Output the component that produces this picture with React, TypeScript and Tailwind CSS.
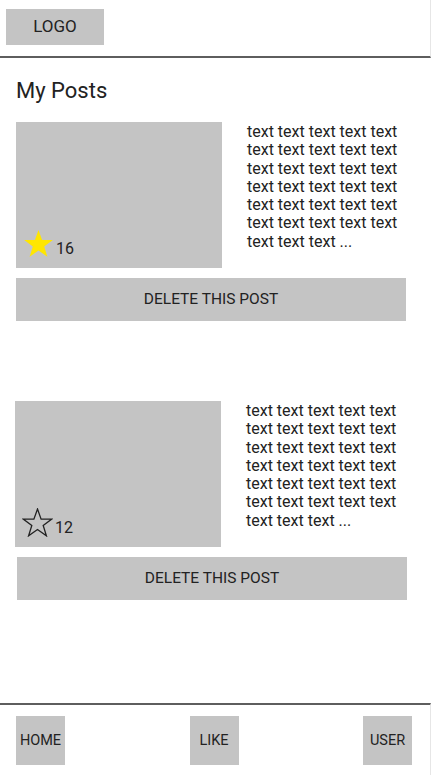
import React from 'react';

type Post = {
  id: number;
  likes: number;
  liked: boolean;
  imgClass: string;
  btnClass: string;
};

const POSTS: Post[] = [
  { id: 1, likes: 16, liked: true, imgClass: 'ml-4', btnClass: 'ml-4' },
  { id: 2, likes: 12, liked: false, imgClass: 'ml-[15px]', btnClass: 'ml-[17px]' },
];

const BODY = [
  'text text text text text',
  'text text text text text',
  'text text text text text',
  'text text text text text',
  'text text text text text',
  'text text text text text',
  'text text text ...',
];

function Star({ filled }: { filled: boolean }) {
  // five point star, 30x28 box
  return (
    <svg width="31" height="29" viewBox="0 0 31 29">
      <polygon
        points="15.5,1 19.1,11.1 29.8,11.1 21.2,17.4 24.4,27.8 15.5,21.5 6.6,27.8 9.8,17.4 1.2,11.1 11.9,11.1"
        fill={filled ? '#ffe600' : 'none'}
        stroke={filled ? 'none' : '#222'}
        strokeWidth={filled ? 0 : 1.3}
        strokeLinejoin="miter"
      />
    </svg>
  );
}

function PostCard({ post }: { post: Post }) {
  return (
    <div className="flex flex-col">
      <div className="flex">
        {/* thumbnail placeholder */}
        <div className={`relative w-[206px] h-[146px] bg-[#c4c4c4] shrink-0 ${post.imgClass}`}>
          <div className="absolute left-[7px] bottom-[10px] flex items-end gap-[2px]">
            <Star filled={post.liked} />
            <span className="text-[16px] leading-[18px] text-[#222]">{post.likes}</span>
          </div>
        </div>
        <p className="ml-[25px] mt-[1px] text-[16px] leading-[18.3px] text-[#222]">
          {BODY.map((line, i) => (
            <span key={i} className="block whitespace-nowrap">
              {line}
            </span>
          ))}
        </p>
      </div>
      <button
        className={`mt-[10px] w-[390px] h-[43px] bg-[#c4c4c4] text-[15.5px] text-[#222] flex items-center justify-center ${post.btnClass}`}
      >
        DELETE THIS POST
      </button>
    </div>
  );
}

export default function App() {
  return (
    <div className="h-[775px] w-[431px] flex flex-col bg-white font-['Roboto','Liberation_Sans',sans-serif] overflow-hidden">
      {/* Header */}
      <header className="h-[58px] shrink-0 border-b-2 border-[#5e5e5e] border-r border-r-[#e6e6e6] flex items-start">
        <div className="mt-[9px] ml-[6px] w-[98px] h-[36px] bg-[#c4c4c4] flex items-center justify-center text-[17px] text-[#222]">
          LOGO
        </div>
      </header>

      {/* Posts */}
      <main className="flex-1 flex flex-col">
        <h1 className="ml-4 mt-[19px] text-[22px] leading-[27px] text-[#222]">My Posts</h1>
        <div className="mt-[18px] flex flex-col gap-[80px]">
          {POSTS.map((p) => (
            <PostCard key={p.id} post={p} />
          ))}
        </div>
      </main>

      {/* Bottom nav */}
      <footer className="h-[72px] shrink-0 border-t-2 border-[#5e5e5e] border-r border-r-[#e6e6e6] flex items-start justify-between pl-4 pr-[18px] pt-[11px]">
        {['HOME', 'LIKE', 'USER'].map((label) => (
          <div
            key={label}
            className="w-[49px] h-[49px] bg-[#c4c4c4] flex items-center justify-center text-[14.5px] text-[#222]"
          >
            {label}
          </div>
        ))}
      </footer>
    </div>
  );
}
